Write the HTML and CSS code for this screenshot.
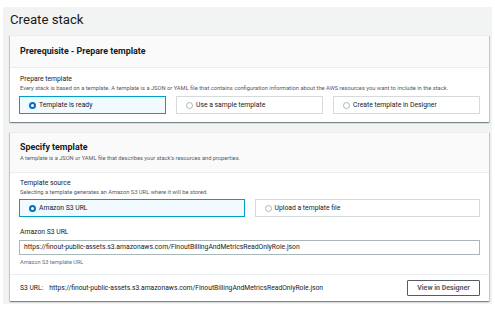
FILE: index.html
```html
<!DOCTYPE html>
<html>
<head>
<meta charset="utf-8">
<link rel="stylesheet" href="styles.css">
</head>
<body>
<div class="page">
  <h1 class="title">Create stack</h1>

  <section class="panel">
    <div class="panel-header">
      <h2 class="panel-title">Prerequisite - Prepare template</h2>
    </div>
    <div class="panel-body">
      <div class="label">Prepare template</div>
      <div class="desc">Every stack is based on a template. A template is a JSON or YAML file that contains configuration information about the AWS resources you want to include in the stack.</div>
      <div class="tiles tiles-3">
        <div class="tile selected"><span class="radio on"></span>Template is ready</div>
        <div class="tile"><span class="radio"></span>Use a sample template</div>
        <div class="tile"><span class="radio"></span>Create template in Designer</div>
      </div>
    </div>
  </section>

  <section class="panel panel-2">
    <div class="panel-header tall">
      <h2 class="panel-title">Specify template</h2>
      <div class="header-desc">A template is a JSON or YAML file that describes your stack's resources and properties.</div>
    </div>
    <div class="panel-body body-2">
      <div class="label">Template source</div>
      <div class="desc desc-2">Selecting a template generates an Amazon S3 URL where it will be stored.</div>
      <div class="tiles tiles-2">
        <div class="tile selected"><span class="radio on"></span>Amazon S3 URL</div>
        <div class="tile"><span class="radio"></span>Upload a template file</div>
      </div>
      <div class="label label-url">Amazon S3 URL</div>
      <div class="input">https://finout-public-assets.s3.amazonaws.com/FinoutBillingAndMetricsReadOnlyRole.json</div>
      <div class="helper">Amazon S3 template URL</div>
    </div>
    <div class="panel-footer">
      <div class="s3url"><span class="s3label">S3 URL:</span><span>https://finout-public-assets.s3.amazonaws.com/FinoutBillingAndMetricsReadOnlyRole.json</span></div>
      <button class="btn">View in Designer</button>
    </div>
  </section>
</div>
</body>
</html>
```

FILE: styles.css
```css
* { box-sizing: border-box; }
html, body { margin: 0; padding: 0; background: #ffffff; }
body {
  font-family: Roboto, "Noto Sans", sans-serif;
  color: #16191f;
}
.page {
  margin: 7px 3px 6px 3px;
  background: #f2f3f3;
  padding: 0 3px 4px 7px;
  height: 297px;
}
.title {
  margin: 0;
  height: 28px;
  font-size: 13.2px;
  font-weight: 400;
  line-height: 22px;
  padding-top: 2px;
  color: #16191f;
}
.panel {
  background: #ffffff;
  box-shadow: 0 1px 1px 0 rgba(0, 28, 36, 0.3), 1px 1px 1px 0 rgba(0, 28, 36, 0.15), -1px 1px 1px 0 rgba(0, 28, 36, 0.15);
  border-top: 1px solid #eaeded;
}
.panel-2 { margin-top: 10px; }
.panel-header {
  background: #fafafa;
  border-bottom: 1px solid #eaeded;
  height: 32px;
  padding: 9px 10px 0;
}
.panel-header.tall { height: 40px; padding-top: 8px; }
.panel-title {
  margin: 0;
  font-size: 8.9px;
  line-height: 13px;
  font-weight: 700;
  color: #16191f;
}
.header-desc {
  font-size: 5.7px;
  line-height: 9px;
  color: #545b64;
}
.panel-body { padding: 7px 9px 8px; }
.body-2 { padding-top: 6px; }
.label {
  font-size: 6.8px;
  line-height: 9px;
  padding-left: 1px;
}
.desc {
  font-size: 5.75px;
  line-height: 8px;
  color: #545b64;
  padding-left: 1px;
  white-space: nowrap;
}
.desc-2 { line-height: 9px; }
.tiles {
  display: grid;
  gap: 10px;
  margin-top: 4px;
}
.tiles-2 { margin-top: 2px; grid-template-columns: 1fr 1fr; }
.tiles-3 { grid-template-columns: 1fr 1fr 1fr; }
.tile {
  height: 18px;
  border: 1px solid #d5dbdb;
  display: flex;
  align-items: center;
  padding-left: 9px;
  font-size: 6.8px;
  color: #16191f;
}
.tile.selected {
  background: #f1faff;
  border-color: #00a1c9;
}
.radio {
  width: 7px;
  height: 7px;
  border-radius: 50%;
  border: 1px solid #aab7b8;
  background: #fff;
  margin-right: 3px;
  flex: none;
}
.radio.on {
  border: 2px solid #0073bb;
  background: #ffffff;
}
.label-url { margin-top: 11px; }
.input {
  margin-top: 3px;
  height: 15px;
  border: 1px solid #aab7b8;
  font-size: 6.8px;
  line-height: 13px;
  padding-left: 4px;
  white-space: nowrap;
  overflow: hidden;
}
.helper {
  margin-top: 3px;
  font-size: 5.6px;
  line-height: 8px;
  color: #687078;
  padding-left: 1px;
}
.panel-footer {
  border-top: 1px solid #eaeded;
  height: 27px;
  display: flex;
  align-items: center;
  justify-content: space-between;
  padding: 0 9px 0 10px;
}
.s3url {
  font-size: 6.75px;
  white-space: nowrap;
  color: #16191f;
}
.s3label { margin-right: 6px; }
.btn {
  font-family: inherit;
  width: 73px;
  height: 16px;
  border: 1px solid #545b64;
  background: #ffffff;
  color: #545b64;
  font-size: 7px;
  font-weight: 700;
  padding: 0;
  border-radius: 1px;
}
```
